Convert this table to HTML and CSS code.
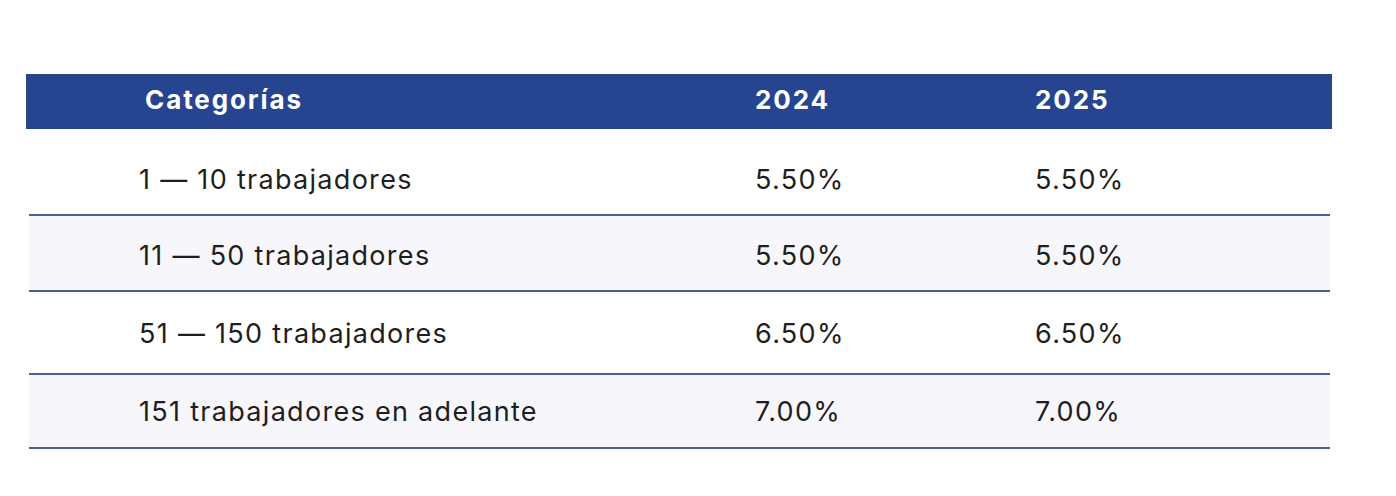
FILE: index.html
```html
<!DOCTYPE html>
<html lang="es">
<head>
<meta charset="utf-8">
<title>Categorías</title>
<link rel="stylesheet" href="styles.css">
</head>
<body>
<div class="table">
  <div class="head">
    <div class="cell">Categorías</div>
    <div class="cell">2024</div>
    <div class="cell">2025</div>
  </div>
  <div class="row first">
    <div class="cell">1 — 10 trabajadores</div>
    <div class="cell">5.50%</div>
    <div class="cell">5.50%</div>
  </div>
  <div class="row alt r2">
    <div class="cell">11 — 50 trabajadores</div>
    <div class="cell">5.50%</div>
    <div class="cell">5.50%</div>
  </div>
  <div class="row r3">
    <div class="cell">51 — 150 trabajadores</div>
    <div class="cell">6.50%</div>
    <div class="cell">6.50%</div>
  </div>
  <div class="row alt r4">
    <div class="cell">151 trabajadores en adelante</div>
    <div class="cell">7.00%</div>
    <div class="cell">7.00%</div>
  </div>
</div>
</body>
</html>
```
FILE: styles.css
```css
html, body {
  margin: 0;
  padding: 0;
  background: #ffffff;
}
body {
  font-family: Inter, "Liberation Sans", sans-serif;
  color: #1e1e1e;
}
.table {
  margin: 74px 0 0 26px;
  width: 1306px;
}
.head {
  display: grid;
  grid-template-columns: 610px 280px 1fr;
  align-items: center;
  height: 55px;
  padding-left: 119px;
  padding-bottom: 5px;
  box-sizing: border-box;
  background: #26448f;
  color: #ffffff;
  font-weight: 700;
  font-size: 26px;
  letter-spacing: 1.9px;
}
.row {
  display: grid;
  grid-template-columns: 616px 280px 1fr;
  align-items: center;
  margin: 0 2px 0 3px;
  padding-left: 110px;
  box-sizing: border-box;
  font-size: 27px;
  letter-spacing: 1.3px;
  border-bottom: 2px solid #4a5e98;
}
.row.alt {
  background: #f7f7fb;
}
.row.first {
  height: 87px;
  padding-top: 15px;
}
.r2 {
  height: 76px;
  padding-top: 5px;
}
.r3 {
  height: 83px;
  padding-top: 2px;
}
.r4 {
  height: 74px;
}
```
